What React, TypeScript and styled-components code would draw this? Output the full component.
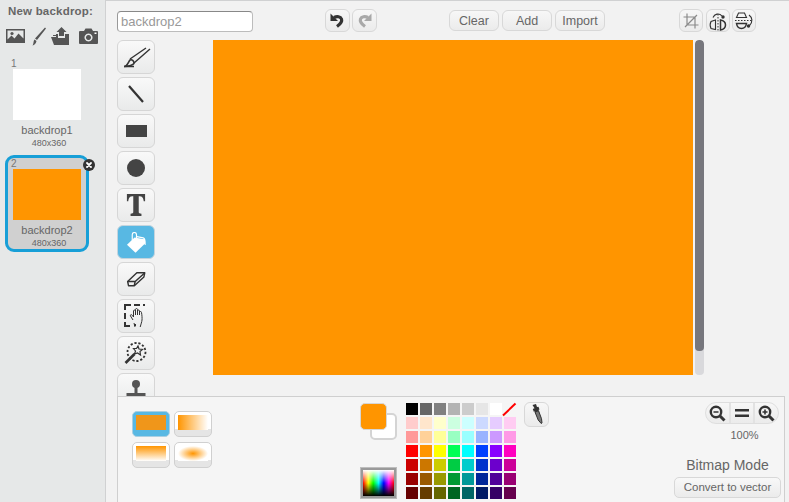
import React from "react";
import styled, { createGlobalStyle } from "styled-components";

const Global = createGlobalStyle`
  html, body { margin: 0; padding: 0; background: #f2f2f2; }
  body { font-family: "Liberation Sans", Arial, sans-serif; }
  * { box-sizing: border-box; }
`;

const ORANGE = "#ff9500";
const ICON = "#444";

const Root = styled.div`
  display: flex;
  width: 789px;
  height: 502px;
  overflow: hidden;
`;

const Sidebar = styled.aside`
  width: 106px;
  flex: none;
  background: #e6e8e8;
  border-right: 1px solid #d0d1d2;
  padding-top: 5px;
  display: flex;
  flex-direction: column;
`;

const NewTitle = styled.div`
  font-size: 11.5px;
  font-weight: bold;
  line-height: 13px;
  color: #666;
  margin-left: 8px;
  letter-spacing: 0.2px;
`;

const NewIcons = styled.div`
  display: flex;
  align-items: center;
  height: 20px;
  margin: 8px 0 0 6px;
  color: #555;
`;

const NewIcon = styled.svg<{ $gap: number }>`
  display: block;
  flex: none;
  margin-right: ${(p) => p.$gap}px;
  fill: #555;
`;

const Thumb = styled.div<{ $selected?: boolean }>`
  position: relative;
  width: 84px;
  height: 97px;
  margin: ${(p) => (p.$selected ? "3px" : "9px")} 0 0 5px;
  border: 3px solid ${(p) => (p.$selected ? "#179fd7" : "transparent")};
  border-radius: 9px;
  background: ${(p) => (p.$selected ? "#d0d0d0" : "transparent")};
  display: flex;
  flex-direction: column;
  align-items: center;
`;

const ThumbNumber = styled.span`
  align-self: flex-start;
  font-size: 10px;
  line-height: 11px;
  margin: 0 0 0 3px;
  color: #777;
`;

const ThumbImage = styled.div<{ $color: string }>`
  width: 68px;
  height: 51px;
  background: ${(p) => p.$color};
`;

const ThumbName = styled.div`
  font-size: 11px;
  line-height: 14px;
  margin-top: 3px;
  color: #666;
`;

const ThumbSize = styled.div`
  font-size: 9px;
  line-height: 12px;
  margin: 0 0 0 4px;
  color: #666;
`;

const Delete = styled.svg`
  position: absolute;
  top: 1px;
  right: -9px;
  display: block;
`;

const Main = styled.main`
  flex: 1;
  min-width: 0;
  display: flex;
  flex-direction: column;
  border-top: 1px solid #d0d1d2;
  background: #f2f2f2;
`;

const TopBar = styled.div`
  display: flex;
  height: 39px;
  flex: none;
  padding: 8px 0 0 11px;
  align-items: flex-start;
`;

const NameInput = styled.div`
  width: 136px;
  height: 21px;
  margin-top: 2px;
  background: #fff;
  border: 1px solid #bcbcbc;
  border-top-color: #888;
  border-left-color: #999;
  border-radius: 4px;
  font-size: 13px;
  line-height: 19px;
  padding-left: 3px;
  color: #999;
`;

const RoundBtn = styled.div<{ $w: number; $h?: number; $ml?: number; $mt?: number }>`
  width: ${(p) => p.$w}px;
  height: ${(p) => p.$h ?? 23}px;
  margin-left: ${(p) => p.$ml ?? 2}px;
  margin-top: ${(p) => p.$mt ?? 0}px;
  flex: none;
  display: flex;
  align-items: center;
  justify-content: center;
  border: 1px solid #d8d8d8;
  border-radius: 6px;
  background: linear-gradient(#f7f7f7, #ebebeb);
  font-size: 12.5px;
  color: #666;
`;

const Middle = styled.div`
  display: flex;
  height: 356px;
  flex: none;
  padding-left: 11px;
  overflow: hidden;
`;

const Tools = styled.div`
  width: 37px;
  flex: none;
  display: flex;
  flex-direction: column;
  gap: 3px;
`;

const Tool = styled.div<{ $active?: boolean }>`
  width: 38px;
  height: 34px;
  flex: none;
  display: flex;
  align-items: center;
  justify-content: center;
  border: 1px solid ${(p) => (p.$active ? "#c4d4dd" : "#d6d6d6")};
  border-radius: 6px;
  background: ${(p) =>
    p.$active ? "#58b8e3" : "linear-gradient(#f9f9f9, #e9eaea)"};
`;

const CanvasWrap = styled.div`
  display: flex;
  margin-left: 59px;
  gap: 2px;
  height: 335px;
`;

const Canvas = styled.div`
  width: 480px;
  height: 335px;
  background: ${ORANGE};
`;

const ScrollTrack = styled.div`
  width: 9px;
  height: 335px;
  border-radius: 4px;
  background: #d9d9dc;
  overflow: hidden;
`;

const ScrollThumb = styled.div`
  height: 311px;
  border-radius: 4px;
  background: #77777d;
`;

const Bottom = styled.section`
  flex: 1;
  margin: 0 4px 0 11px;
  display: flex;
  background: #f5f5f5;
  border: 1px solid #cfcfcf;
  border-bottom: none;
  padding: 5px 3px 0 14px;
`;

const FillGrid = styled.div`
  display: grid;
  grid-template-columns: 38px 38px;
  grid-auto-rows: 26px;
  column-gap: 4px;
  row-gap: 5px;
  margin-top: 9px;
  align-self: flex-start;
`;

const FillBtn = styled.div<{ $active?: boolean }>`
  border: 1px solid ${(p) => (p.$active ? "#a9cfe2" : "#d0d0d0")};
  border-radius: 5px;
  background: ${(p) => (p.$active ? "#58b8e3" : "linear-gradient(#fff 70%, #e5e5e5 70%)")};
  padding: 3px 3px 6px 3px;
  display: flex;
`;

const FillSwatch = styled.div<{ $fill: string }>`
  flex: 1;
  background: ${(p) => p.$fill};
`;

const Swatches = styled.div`
  width: 38px;
  margin-left: 148px;
  display: flex;
  flex-direction: column;
  justify-content: space-between;
  height: 97px;
  position: relative;
  flex: none;
`;

const Primary = styled.div`
  position: relative;
  z-index: 1;
  width: 27px;
  height: 27px;
  margin-top: 1px;
  border: 1px solid #d6d6d6;
  border-radius: 5px;
  background: ${ORANGE};
`;

const Secondary = styled.div`
  position: absolute;
  left: 10px;
  top: 11px;
  width: 27px;
  height: 27px;
  border: 2px solid #d4d4d4;
  border-radius: 5px;
  background: #fff;
`;

const Spectrum = styled.svg`
  display: block;
  width: 37px;
  height: 32px;
  border: 3px solid #9a9a9a;
  outline: 1px solid #bdbdbd;
  outline-offset: -1px;
`;

const Palette = styled.div`
  display: grid;
  grid-template-columns: repeat(8, 12px);
  grid-auto-rows: 12px;
  gap: 2px;
  margin: 1px 0 0 8px;
  align-self: flex-start;
  flex: none;
`;

const Cell = styled.div<{ $c: string }>`
  background: ${(p) => p.$c};
`;

const NoColor = styled.svg`
  display: block;
  overflow: visible;
`;

const Right = styled.div`
  margin-left: auto;
  width: 107px;
  display: flex;
  flex-direction: column;
  align-items: center;
  flex: none;
`;

const ZoomGroup = styled.div`
  display: flex;
  width: 74px;
  height: 22px;
  align-self: flex-end;
  margin-right: 2px;
  border: 1px solid #dedede;
  border-radius: 11px;
  background: linear-gradient(#f7f7f7, #ebebeb);
  overflow: hidden;
`;

const ZoomPart = styled.div`
  flex: 1;
  display: flex;
  align-items: center;
  justify-content: center;
  & + & { border-left: 2px solid #e2e2e2; }
`;

const Percent = styled.div`
  font-size: 11px;
  line-height: 13px;
  margin: 5px 0 0 34px;
  color: #666;
`;

const Mode = styled.div`
  font-size: 14px;
  line-height: 16px;
  margin-top: 15px;
  color: #666;
`;

const Convert = styled.div`
  width: 107px;
  height: 21px;
  margin-top: 4px;
  border: 1px solid #d8d8d8;
  border-radius: 5px;
  background: linear-gradient(#f8f8f8, #ebebeb);
  font-size: 11.5px;
  line-height: 19px;
  text-align: center;
  color: #666;
`;

const palette = [
  ["#000000", "#666666", "#808080", "#b3b3b3", "#cccccc", "#e6e6e6", "#ffffff", "none"],
  ["#ffcccc", "#ffe6cc", "#ffffcc", "#ccffe0", "#ccffff", "#ccd9ff", "#e6ccff", "#ffccf2"],
  ["#ff9999", "#ffd199", "#ffff99", "#99ffc2", "#99ffff", "#99b3ff", "#cc99ff", "#ff99e6"],
  ["#ff0000", "#ff9500", "#ffff00", "#00ff55", "#00ffff", "#0040ff", "#8800ff", "#ff00bf"],
  ["#cc0000", "#cc7700", "#cccc00", "#00cc44", "#00cccc", "#0033cc", "#6c00cc", "#cc0099"],
  ["#990000", "#995900", "#999900", "#009933", "#009999", "#002699", "#510099", "#990073"],
  ["#660000", "#663c00", "#666600", "#006622", "#006666", "#001a66", "#360066", "#66004d"],
];

export default function App() {
  return (
    <Root>
      <Global />
      <Sidebar>
        <NewTitle>New backdrop:</NewTitle>
        <NewIcons>
          <NewIcon $gap={7} width="19" height="16" viewBox="0 0 19 16">
            <path fillRule="evenodd" d="M0 1h19v14H0z M1.500 2.500v9l4-4 3 3 4-5 5 5v-8z" />
            <circle cx="6" cy="5.500" r="1.600" />
          </NewIcon>
          <NewIcon $gap={5} width="14" height="19" viewBox="0 0 14 19">
            <path d="M13 0.500 L14 1.500 L5 13 L3 11.500Z M2.500 12.500 L4.500 14 C4 16.500 2.500 18 0.500 18.500 C1.800 17 1.200 14 2.500 12.500Z" />
          </NewIcon>
          <NewIcon $gap={9} width="19" height="19" viewBox="0 0 19 19">
            <path d="M0 10h5v-3h2v4H14V7h4v11H3z" />
            <path d="M8 9V5H5.500L10.500 0l5 5H13v4z" />
            <path d="M2 8h3v1H2z" />
          </NewIcon>
          <NewIcon $gap={0} width="19" height="16" viewBox="0 0 19 16">
            <path fillRule="evenodd" d="M1 3h4l1.500-2.500h6L14 3h4a1 1 0 0 1 1 1v11a1 1 0 0 1-1 1H1a1 1 0 0 1-1-1V4a1 1 0 0 1 1-1z M9.500 5.500a4 4 0 1 0 .01 0z M9.500 7a2.500 2.500 0 1 1-.01 0z" />
            <path d="M15.500 4.500h2v1.500h-2z" fill="#fff" />
          </NewIcon>
        </NewIcons>
        <Thumb>
          <ThumbNumber>1</ThumbNumber>
          <ThumbImage $color="#fff" />
          <ThumbName>backdrop1</ThumbName>
          <ThumbSize>480x360</ThumbSize>
        </Thumb>
        <Thumb $selected>
          <ThumbNumber>2</ThumbNumber>
          <ThumbImage $color={ORANGE} />
          <ThumbName>backdrop2</ThumbName>
          <ThumbSize>480x360</ThumbSize>
          <Delete width="12" height="12" viewBox="0 0 12 12">
            <circle cx="6" cy="6" r="6" fill="#333" />
            <path d="M4 4l4 4M8 4l-4 4" stroke="#fff" strokeWidth="1.800" strokeLinecap="round" />
          </Delete>
        </Thumb>
      </Sidebar>
      <Main>
        <TopBar>
          <NameInput>backdrop2</NameInput>
          <RoundBtn $w={25} $ml={72}>
            <svg width="17" height="17" viewBox="0 0 17 17">
              <path d="M1.500 1.500V9H9z" fill="#333" />
              <path d="M5 5.500c3-1.500 6.500-1 7.500 1.500 1 3-1 5-4.500 7.500" fill="none" stroke="#333" strokeWidth="3.200" />
            </svg>
          </RoundBtn>
          <RoundBtn $w={25}>
            <svg width="17" height="17" viewBox="0 0 17 17">
              <g transform="matrix(-1 0 0 1 17 0)">
                <path d="M1.500 1.500V9H9z" fill="#a8a8a8" />
                <path d="M5 5.500c3-1.500 6.500-1 7.500 1.500 1 3-1 5-4.500 7.500" fill="none" stroke="#a8a8a8" strokeWidth="3.200" />
              </g>
            </svg>
          </RoundBtn>
          <RoundBtn $w={50} $h={21} $ml={72} $mt={1}>Clear</RoundBtn>
          <RoundBtn $w={50} $h={21} $ml={3} $mt={1}>Add</RoundBtn>
          <RoundBtn $w={50} $h={21} $ml={3} $mt={1}>Import</RoundBtn>
          <RoundBtn $w={24} $ml={74}>
            <svg width="16" height="16" viewBox="0 0 16 16" fill="none" stroke="#8a8a8a" strokeWidth="1.200">
              <path d="M4 0.500V12h11.500M0.500 4H12v11.500M2 14L14 2" />
            </svg>
          </RoundBtn>
          <RoundBtn $w={24} $ml={3}>
            <svg width="20" height="20" viewBox="0 0 20 20" fill="none" stroke="#333">
              <path d="M10 3v17" strokeDasharray="1.500 1.500" strokeWidth="1" />
              <path d="M7.500 9L3 10.500c-1 2-1 5 0 7l4.500 1z" strokeWidth="1.100" />
              <path d="M12.500 9c3 .5 5 2 5 5s-2 4.500-5 5z" strokeWidth="1.500" />
              <path d="M5 6.500C6.500 3 11 1.500 14 5" strokeWidth="1.100" />
              <circle cx="15" cy="6" r="1.700" fill="#333" stroke="none" />
            </svg>
          </RoundBtn>
          <RoundBtn $w={24}>
            <svg width="20" height="20" viewBox="0 0 20 20" fill="none" stroke="#333">
              <path d="M1 9.500h17" strokeDasharray="1.500 1.500" strokeWidth="1" />
              <path d="M2.500 6.500L4.500 2h6l2 4.500z" strokeWidth="1.100" />
              <path d="M2.500 12.500c.5 3 2.500 5 5 5s4.500-2 5-5z" strokeWidth="1.500" />
              <path d="M15 4c3.500 2.500 4 7 .5 10.500" strokeWidth="1.100" />
              <circle cx="14.500" cy="15" r="1.700" fill="#333" stroke="none" />
            </svg>
          </RoundBtn>
        </TopBar>
        <Middle>
          <Tools>
            <Tool>
              <svg width="30" height="26" viewBox="0 0 30 26" fill="none" stroke="#333">
                <path d="M3 22.500h10M13 19L29 5M9 15L25 4" strokeWidth="1.400" />
                <path d="M3 22.500c3 0 4-4 6-6.500 2-1 4 1 4 3 0 2-6 3.500-10 3.500z" strokeWidth="1.600" />
              </svg>
            </Tool>
            <Tool>
              <svg width="20" height="20" viewBox="0 0 20 20">
                <path d="M3 2l14 16" stroke="#333" strokeWidth="2.200" />
              </svg>
            </Tool>
            <Tool>
              <svg width="21" height="12" viewBox="0 0 21 12">
                <rect width="21" height="12" fill={ICON} />
              </svg>
            </Tool>
            <Tool>
              <svg width="18" height="18" viewBox="0 0 18 18">
                <circle cx="9" cy="9" r="9" fill={ICON} />
              </svg>
            </Tool>
            <Tool>
              <svg width="20" height="24" viewBox="0 0 22 24">
                <path fill={ICON} d="M1 0h20v8h-1.500C19 4 18 2.500 14 2.500V20c0 1 1 1.500 3 1.500V24H5v-2.500c2 0 3-.5 3-1.500V2.500C4 2.500 3 4 2.500 8H1z" />
              </svg>
            </Tool>
            <Tool $active>
              <svg width="19" height="21" viewBox="50 65 58 62" fill="#fff">
                <path d="M50 103L73 81l30 5 2 13-29 28z" />
                <path d="M66 90V72a6.500 6.500 0 0 1 13 0v10" fill="none" stroke="#fff" strokeWidth="3.500" />
                <path d="M80 76l20 4c6 2 8 10 7 24-3 0-4-3-5-8l-2-12-20-4z" />
              </svg>
            </Tool>
            <Tool>
              <svg width="20" height="16" viewBox="0 0 24 19" fill="none" stroke="#333" strokeWidth="1.700">
                <path d="M2 12.500L13 2h9.500l-1 5L10 17.500H3z" strokeLinejoin="round" />
                <path d="M2 12.500h9l11-10M11 12.500l-1 4.500" />
              </svg>
            </Tool>
            <Tool>
              <svg width="24" height="24" viewBox="0 0 24 24" fill="none" stroke="#333">
                <path d="M1 6V1h6M10 1h6M21 1h-2M1 9v6M1 18v4h5M10 21h2" strokeWidth="2" />
                <path d="M9 16l-2.500-4c-.5-1.500 1-1.800 2-.5l1 1.500V7c0-1.300 2-1.300 2 0v4-5.500c0-1.300 2-1.300 2 0V11 7c0-1.300 2-1.300 2 0v4-2.500c0-1.300 2-1.300 2 0 .5 3 .7 5.500.5 7.500-.2 2-1 4-1.800 7M10 19l1 4" strokeWidth="1" />
              </svg>
            </Tool>
            <Tool>
              <svg width="24" height="24" viewBox="0 0 24 24" fill="none" stroke="#333">
                <circle cx="12.500" cy="11" r="9" strokeWidth="1.800" strokeDasharray="2.200 1.800" />
                <path d="M1.500 22l9-9" strokeWidth="2.600" />
                <path d="M14 5l1 3 3.500.5-2.500 2 .5 3.500-3-2-3 1 1-3-2-2.500h3z" fill="#f2f2f2" strokeWidth="1.200" />
              </svg>
            </Tool>
            <Tool>
              <svg width="20" height="22" viewBox="0 0 20 22" fill="#555">
                <circle cx="10" cy="5" r="4" />
                <path d="M8.500 8h3v6h8v4H.5v-4h8z" />
              </svg>
            </Tool>
          </Tools>
          <CanvasWrap>
            <Canvas />
            <ScrollTrack>
              <ScrollThumb />
            </ScrollTrack>
          </CanvasWrap>
        </Middle>
        <Bottom>
          <FillGrid>
            <FillBtn $active>
              <FillSwatch $fill="#f0961a" />
            </FillBtn>
            <FillBtn>
              <FillSwatch $fill={`linear-gradient(90deg, ${ORANGE}, #fff)`} />
            </FillBtn>
            <FillBtn>
              <FillSwatch $fill={`linear-gradient(180deg, ${ORANGE}, #fff)`} />
            </FillBtn>
            <FillBtn>
              <FillSwatch $fill={`radial-gradient(ellipse 50% 50% at 50% 50%, ${ORANGE}, #fff)`} />
            </FillBtn>
          </FillGrid>
          <Swatches>
            <Primary />
            <Secondary />
            <Spectrum viewBox="0 0 31 26" preserveAspectRatio="none">
              <defs>
                <linearGradient id="hue" x1="0" x2="1" y1="0" y2="0">
                  <stop offset="0" stopColor="#f00" />
                  <stop offset="0.17" stopColor="#ff0" />
                  <stop offset="0.33" stopColor="#0f0" />
                  <stop offset="0.5" stopColor="#0ff" />
                  <stop offset="0.67" stopColor="#00f" />
                  <stop offset="0.83" stopColor="#f0f" />
                  <stop offset="1" stopColor="#f00" />
                </linearGradient>
                <linearGradient id="white" x1="0" x2="0" y1="0" y2="1">
                  <stop offset="0" stopColor="#fff" />
                  <stop offset="0.5" stopColor="#fff" stopOpacity="0" />
                </linearGradient>
                <linearGradient id="black" x1="0" x2="0" y1="0" y2="1">
                  <stop offset="0.5" stopColor="#000" stopOpacity="0" />
                  <stop offset="1" stopColor="#000" />
                </linearGradient>
              </defs>
              <rect width="31" height="26" fill="url(#hue)" />
              <rect width="31" height="26" fill="url(#white)" />
              <rect width="31" height="26" fill="url(#black)" />
            </Spectrum>
          </Swatches>
          <Palette>
            {palette.flat().map((c, i) =>
              c === "none" ? (
                <NoColor key={i} width="12" height="12" viewBox="0 0 12 12">
                  <path d="M-1 12.500L11.500 0.500" stroke="#f00" strokeWidth="2" />
                </NoColor>
              ) : (
                <Cell key={i} $c={c} />
              )
            )}
          </Palette>
          <RoundBtn $w={25} $h={25} $ml={8}>
            <svg width="14" height="21" viewBox="0 0 14 21">
              <path fill="#333" d="M2.500 1l3.500-1 1 3 1.500-.3 1 2.800-1.200.6 1 2.900-3.500 1.300-1-2.900-1 .4-1-2.800 1.700-.8z" />
              <path fill="#777" stroke="#333" strokeWidth="1" d="M5 8l3.500-1.300 3 8 .5 4.300-.8.500-3-3.500z" />
            </svg>
          </RoundBtn>
          <Right>
            <ZoomGroup>
              <ZoomPart>
                <svg width="17" height="17" viewBox="0 0 17 17" fill="none" stroke="#333">
                  <circle cx="7" cy="7" r="5.200" strokeWidth="2.400" />
                  <path d="M11 11l4.500 4.500" strokeWidth="3" />
                  <path d="M4.500 7h5" strokeWidth="1.600" />
                </svg>
              </ZoomPart>
              <ZoomPart>
                <svg width="14" height="10" viewBox="0 0 14 10" fill="#333">
                  <rect y="1" width="14" height="2.500" />
                  <rect y="6.500" width="14" height="2.500" />
                </svg>
              </ZoomPart>
              <ZoomPart>
                <svg width="17" height="17" viewBox="0 0 17 17" fill="none" stroke="#333">
                  <circle cx="7" cy="7" r="5.200" strokeWidth="2.400" />
                  <path d="M11 11l4.500 4.500" strokeWidth="3" />
                  <path d="M4.500 7h5M7 4.500v5" strokeWidth="1.600" />
                </svg>
              </ZoomPart>
            </ZoomGroup>
            <Percent>100%</Percent>
            <Mode>Bitmap Mode</Mode>
            <Convert>Convert to vector</Convert>
          </Right>
        </Bottom>
      </Main>
    </Root>
  );
}
